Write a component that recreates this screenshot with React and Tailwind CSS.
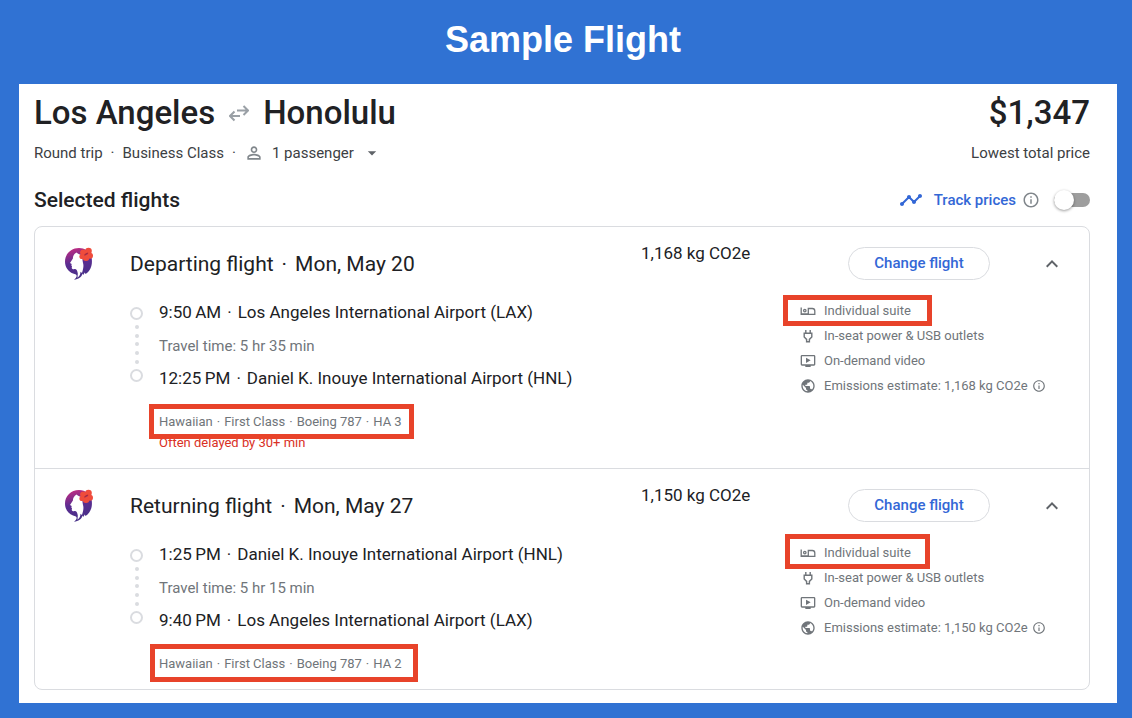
import React, { useState } from "react";
import {
  MdArrowDropDown,
  MdExpandLess,
  MdExpandMore,
  MdInfoOutline,
  MdOndemandVideo,
  MdPersonOutline,
  MdPublic,
  MdTimeline,
} from "react-icons/md";

const legs = [
  {
    id: "departing",
    title: "Departing flight",
    date: "Mon, May 20",
    co2: "1,168 kg CO2e",
    from: { time: "9:50\u2009AM", airport: "Los Angeles International Airport (LAX)" },
    to: { time: "12:25\u2009PM", airport: "Daniel K. Inouye International Airport (HNL)" },
    duration: "5 hr 35 min",
    details: ["Hawaiian", "First Class", "Boeing 787", "HA 3"],
    warning: "Often delayed by 30+ min",
    detailsBox: "-left-[10px] -right-[12px] -top-[10px] -bottom-[9px]",
    suiteBox: "-left-[17px] -right-[21px] -top-[3px] -bottom-[3px]",
  },
  {
    id: "returning",
    title: "Returning flight",
    date: "Mon, May 27",
    co2: "1,150 kg CO2e",
    from: { time: "1:25\u2009PM", airport: "Daniel K. Inouye International Airport (HNL)" },
    to: { time: "9:40\u2009PM", airport: "Los Angeles International Airport (LAX)" },
    duration: "5 hr 15 min",
    details: ["Hawaiian", "First Class", "Boeing 787", "HA 2"],
    detailsBox: "-left-[9px] -right-[16px] -top-[12px] -bottom-[10px]",
    suiteBox: "-left-[15px] -right-[19px] -top-[6px] -bottom-[4px]",
  },
];

const Highlight = ({ className }) => (
  <span
    aria-hidden="true"
    className={`pointer-events-none absolute border-[5px] border-[#e8432a] ${className}`}
  />
);

const SwapIcon = () => (
  <svg width="20" height="18" viewBox="0 0 20 18" fill="none" stroke="#9aa0a6" strokeWidth="2">
    <path d="M8 6.500h11M14.500 2l4.500 4.500-4.500 4.500" />
    <path d="M11 12H1M5.500 7.500 1 12l4.500 4.500" />
  </svg>
);

const SuiteIcon = () => (
  <svg width="16" height="16" viewBox="0 0 16 16" fill="none" stroke="currentColor" strokeWidth="1.300">
    <path d="M1.200 4.500v6.900h13.600V8a2.500 2.500 0 0 0-2.500-2.500H8.300v5.900M1.200 10.800h7" />
    <circle cx="4.800" cy="7.600" r="1.200" />
  </svg>
);

const PlugIcon = () => (
  <svg width="16" height="16" viewBox="0 0 16 16" fill="none" stroke="currentColor" strokeWidth="1.400">
    <path d="M5.800 2v3.300M10.200 2v3.300M4.200 5.300h7.600v3.700L9.400 11.400v2.300H6.600v-2.300L4.200 9z" />
  </svg>
);

const HawaiianLogo = () => (
  <svg width="28" height="34" viewBox="0 0 28 34" role="img" aria-label="Hawaiian Airlines">
    <defs>
      <linearGradient id="hair" x1="0.300" y1="0" x2="0.500" y2="1">
        <stop offset="0" stopColor="#c02b82" />
        <stop offset="0.450" stopColor="#5c2d91" />
        <stop offset="1" stopColor="#443087" />
      </linearGradient>
    </defs>
    <path
      d="M14 1C6 1 0 7 0 14.500 0 20 3 24.500 8 26.500l2.300.8c2.200.9 1.700 3.400-1.300 5.500 4.500-.5 7.600-2.600 8.600-6.200l.6 1.400 1.600-2.600.7 1.700C25.500 23.600 27.500 18.500 26.800 12 26 5 20.500 1 14 1z"
      fill="url(#hair)"
    />
    <path
      d="M11.500 5.500C9 7 7.900 9 7.900 11.500L5 16l1.700.9-.4 1.500.7.9-.3 1.600c.4 1.300 1.800 1.400 3.500 1.100 1.600.5 2.300 2.300 2.600 4.600l-.3 4.200c1.900-1.400 3-3.400 3-6l1.500 1.300c1.300-4.600 2-7.200.9-10.600-.6-2.600-.4-5.600-1-7.500-2-.3-3.700-1-5.400-2.500z"
      fill="#fff"
    />
    <g fill="#ef4c3c">
      <circle cx="18.200" cy="5.500" r="3.100" />
      <circle cx="23.500" cy="4" r="3.300" />
      <circle cx="25" cy="8.700" r="3" />
      <circle cx="21" cy="10.800" r="3.300" />
      <circle cx="17" cy="9.500" r="2.600" />
    </g>
    <path d="M19.500 8.300c1-1.200 2.200-1.900 3.600-2.100" stroke="#a82b3f" strokeWidth="1.300" fill="none" />
  </svg>
);

const Toggle = () => {
  const [on, setOn] = useState(false);
  return (
    <label className="relative flex h-6 w-9 cursor-pointer items-center">
      <input
        type="checkbox"
        role="switch"
        aria-label="Track prices"
        checked={on}
        onChange={() => setOn(!on)}
        className="peer h-[14px] w-9 cursor-pointer appearance-none rounded-full bg-[#9e9e9e] checked:bg-[#8ab4f8]"
      />
      <span className="pointer-events-none absolute left-0 h-5 w-5 rounded-full bg-white shadow-[0_1px_3px_rgba(0,0,0,0.4)] peer-checked:left-4 peer-checked:bg-[#1a73e8]" />
    </label>
  );
};

const Timeline = () => (
  <div className="flex w-[13px] flex-col items-center pt-[7px]">
    <span className="h-[13px] w-[13px] rounded-full border-2 border-[#dadce0]" />
    <span className="flex h-[49px] flex-col items-center justify-evenly">
      {[0, 1, 2, 3, 4].map((dot) => (
        <span key={dot} className="h-1 w-1 rounded-full bg-[#dadce0]" />
      ))}
    </span>
    <span className="h-[13px] w-[13px] rounded-full border-2 border-[#dadce0]" />
  </div>
);

const Stop = ({ time, airport }) => (
  <p className="flex gap-[6px] text-[17px] leading-6 text-[#202124]">
    <span>{time}</span>
    <span>·</span>
    <span>{airport}</span>
  </p>
);

const Amenity = ({ icon, children }) => (
  <li className="flex h-[25px]">
    <span className="relative flex items-center gap-2">
      <span className="flex w-4 justify-center">{icon}</span>
      {children}
    </span>
  </li>
);

const FlightLeg = ({ leg }) => {
  const [open, setOpen] = useState(true);
  return (
    <section className="border-b border-[#dadce0] pt-5 pb-[17px] last:border-b-0">
      <div className="flex h-[33px] items-center pr-[25px] pl-[30px]">
        <HawaiianLogo />
        <h3 className="ml-[37px] flex flex-1 gap-2 text-[21px] leading-7 text-[#202124]">
          <span>{leg.title}</span>
          <span>·</span>
          <span>{leg.date}</span>
        </h3>
        <p className="w-[207px] self-start text-[17px] leading-3 text-[#202124]">{leg.co2}</p>
        <button
          type="button"
          className="h-[33px] w-[142px] rounded-full border border-[#dadce0] text-[15px] font-medium text-[#3367d6]"
        >
          Change flight
        </button>
        <button
          type="button"
          aria-label="Toggle flight details"
          aria-expanded={open}
          onClick={() => setOpen(!open)}
          className="ml-[50px] text-[#5f6368]"
        >
          {open ? <MdExpandLess size={24} /> : <MdExpandMore size={24} />}
        </button>
      </div>

      {open && (
        <div className="flex items-start pl-[95px]">
          <div className="mt-5 flex flex-1 items-start gap-4">
            <Timeline />
            <div>
              <Stop {...leg.from} />
              <p className="mt-3 text-[15px] leading-5 text-[#70757a]">Travel time: {leg.duration}</p>
              <div className="mt-[10px]">
                <Stop {...leg.to} />
              </div>
              <p className="relative mt-6 flex w-fit gap-1 text-[13px] leading-4 text-[#70757a]">
                {leg.details.map((detail, i) => (
                  <React.Fragment key={detail}>
                    {i > 0 && <span>·</span>}
                    <span>{detail}</span>
                  </React.Fragment>
                ))}
                <Highlight className={leg.detailsBox} />
              </p>
              {leg.warning && <p className="mt-[5px] text-[13px] leading-4 text-[#d93025]">{leg.warning}</p>}
            </div>
          </div>
          <ul className="mt-[18px] w-[289px] text-[13px] text-[#70757a]">
            <Amenity icon={<SuiteIcon />}>
              Individual suite
              <Highlight className={leg.suiteBox} />
            </Amenity>
            <Amenity icon={<PlugIcon />}>In-seat power &amp; USB outlets</Amenity>
            <Amenity icon={<MdOndemandVideo size={16} />}>On-demand video</Amenity>
            <Amenity icon={<MdPublic size={16} />}>
              <span className="flex items-center gap-1">
                Emissions estimate: {leg.co2}
                <MdInfoOutline size={14} />
              </span>
            </Amenity>
          </ul>
        </div>
      )}
    </section>
  );
};

const App = () => {
  return (
    <div className="min-h-screen bg-[#3072d3] pr-[15px] pb-[15px] pl-[19px] font-[Roboto,sans-serif]">
      <h1 className="flex h-[84px] items-center justify-center pr-[10px] pb-1 font-['Liberation_Sans',sans-serif] text-[36px] font-bold text-white">
        Sample Flight
      </h1>

      <main className="bg-white pt-2 pr-[27px] pb-[13px] pl-[15px]">
        <div className="flex items-center justify-between text-[33px] leading-[42px] font-medium text-[#202124]">
          <h2 className="flex items-center gap-[14px]">
            Los Angeles
            <SwapIcon />
            Honolulu
          </h2>
          <p>$1,347</p>
        </div>

        <div className="mt-[7px] flex items-center justify-between text-[15px] leading-6 text-[#3c4043]">
          <div className="flex items-center gap-2">
            <span>Round trip</span>
            <span>·</span>
            <span>Business Class</span>
            <span>·</span>
            <button type="button" className="flex items-center">
              <MdPersonOutline size={20} className="text-[#80868b]" />
              <span className="ml-2">1 passenger</span>
              <MdArrowDropDown size={20} className="ml-2 text-[#5f6368]" />
            </button>
          </div>
          <p>Lowest total price</p>
        </div>

        <div className="mt-[21px] flex items-center justify-between">
          <h2 className="text-[21px] leading-7 font-medium text-[#202124]">Selected flights</h2>
          <div className="flex items-center">
            <MdTimeline size={24} className="text-[#3367d6]" />
            <span className="ml-[11px] text-[15px] font-medium text-[#3367d6]">Track prices</span>
            <MdInfoOutline size={18} className="mr-[14px] ml-[6px] text-[#80868b]" />
            <Toggle />
          </div>
        </div>

        <div className="mt-3 rounded-lg border border-[#dadce0]">
          {legs.map((leg) => (
            <FlightLeg key={leg.id} leg={leg} />
          ))}
        </div>
      </main>
    </div>
  );
};

export default App;
